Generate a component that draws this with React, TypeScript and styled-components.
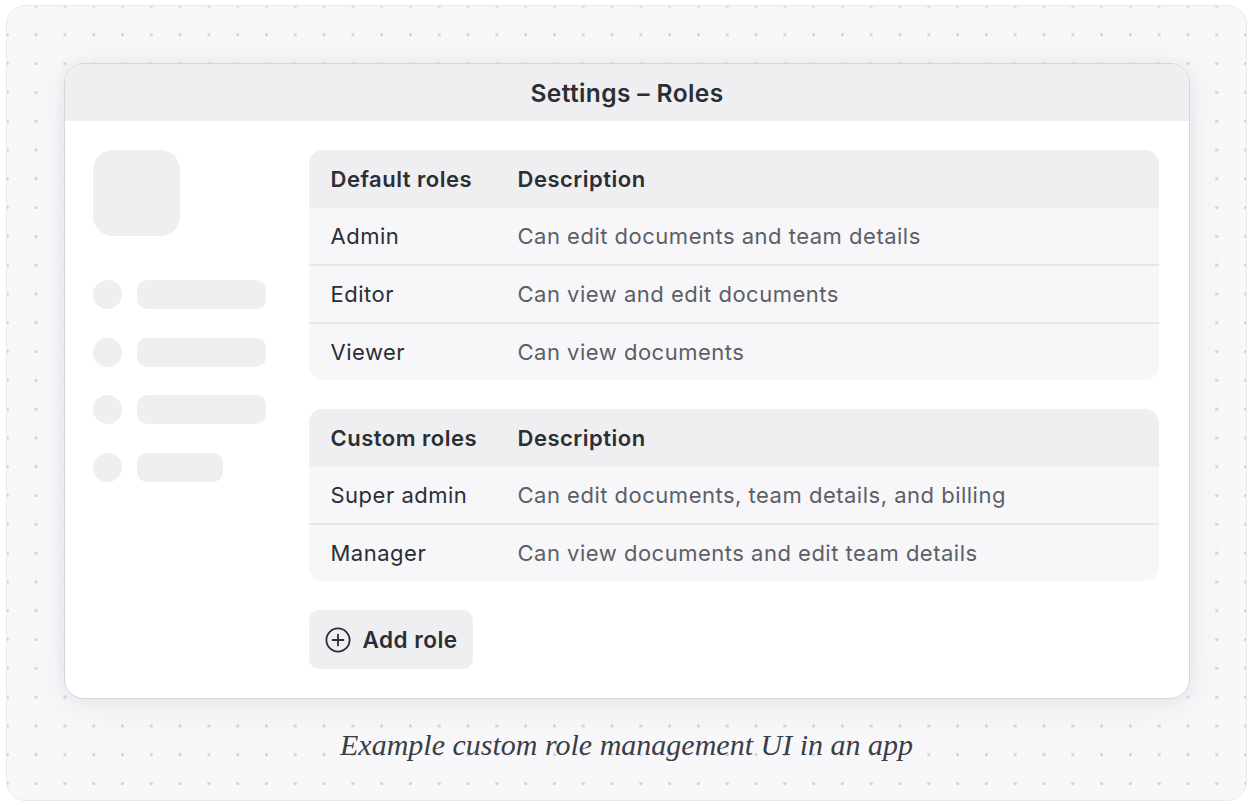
import React from 'react';
import styled, { createGlobalStyle } from 'styled-components';

const GlobalStyle = createGlobalStyle`
  html, body {
    margin: 0;
    padding: 0;
    background: #ffffff;
  }
  body {
    font-family: Inter, 'Noto Sans', sans-serif;
    color: #2a2e35;
  }
`;

type Role = { name: string; description: string };

const defaultRoles: Role[] = [
  { name: 'Admin', description: 'Can edit documents and team details' },
  { name: 'Editor', description: 'Can view and edit documents' },
  { name: 'Viewer', description: 'Can view documents' },
];

const customRoles: Role[] = [
  { name: 'Super admin', description: 'Can edit documents, team details, and billing' },
  { name: 'Manager', description: 'Can view documents and edit team details' },
];

const skeletonBars = [129, 129, 129, 86];

const PlusCircleIcon = () => (
  <svg width='26' height='26' viewBox='0 0 26 26' fill='none'>
    <circle cx='13' cy='13' r='11.6' stroke='#2a2e35' strokeWidth='1.8' />
    <path d='M13 7.6v10.8M7.6 13h10.8' stroke='#2a2e35' strokeWidth='1.8' strokeLinecap='round' />
  </svg>
);

const RolesTable = ({ title, roles }: { title: string; roles: Role[] }) => (
  <Table>
    <HeadRow>
      <HeadCell>{title}</HeadCell>
      <HeadCell>Description</HeadCell>
    </HeadRow>
    {roles.map((role) => (
      <BodyRow key={role.name}>
        <NameCell>{role.name}</NameCell>
        <DescriptionCell>{role.description}</DescriptionCell>
      </BodyRow>
    ))}
  </Table>
);

const App = () => {
  return (
    <>
      <GlobalStyle />
      <Frame>
        <Window>
          <WindowHeader>Settings – Roles</WindowHeader>
          <WindowBody>
            <Sidebar>
              <AvatarSkeleton />
              <SkeletonList>
                {skeletonBars.map((width, i) => (
                  <SkeletonRow key={i}>
                    <SkeletonDot />
                    <SkeletonBar $width={width} />
                  </SkeletonRow>
                ))}
              </SkeletonList>
            </Sidebar>
            <Content>
              <RolesTable title='Default roles' roles={defaultRoles} />
              <RolesTable title='Custom roles' roles={customRoles} />
              <AddRoleButton type='button'>
                <PlusCircleIcon />
                Add role
              </AddRoleButton>
            </Content>
          </WindowBody>
        </Window>
        <Caption>Example custom role management UI in an app</Caption>
      </Frame>
    </>
  );
};

export default App;

const Frame = styled.div`
  box-sizing: border-box;
  width: 1241px;
  height: 796px;
  margin: 5px 0 0 6px;
  padding: 57px 0 0 57px;

  border: 1px solid #e9e9ec;
  border-radius: 20px;

  background-color: #f8f8fa;
  background-image: radial-gradient(circle, #d3d3d8 1.3px, transparent 1.8px);
  background-size: 28.8px 28.8px;
  background-position: -14.1px -14.4px;
`;

const Window = styled.div`
  box-sizing: border-box;
  width: 1126px;
  height: 636px;

  display: flex;
  flex-direction: column;

  overflow: hidden;
  background: #ffffff;
  border: 1.5px solid #d6d6db;
  border-radius: 20px;
  box-shadow: 0 6px 36px rgba(30, 30, 40, 0.07), 0 0 0 6px rgba(240, 240, 243, 0.35);
`;

const WindowHeader = styled.div`
  flex: 0 0 57px;

  display: flex;
  align-items: center;
  justify-content: center;

  background: #efeff1;

  font-weight: 600;
  font-size: 24.5px;
  letter-spacing: 0.4px;
  color: #2a2e35;
`;

const WindowBody = styled.div`
  display: grid;
  grid-template-columns: 173px 850px;
  column-gap: 43px;

  padding: 29px 0 0 27.5px;
`;

const Sidebar = styled.div`
  display: flex;
  flex-direction: column;
`;

const AvatarSkeleton = styled.div`
  width: 87px;
  height: 86px;

  border-radius: 20px;
  background: #efeff1;
`;

const SkeletonList = styled.div`
  display: flex;
  flex-direction: column;
  gap: 28.6px;

  margin-top: 44px;
`;

const SkeletonRow = styled.div`
  display: flex;
  align-items: center;
  gap: 15px;
`;

const SkeletonDot = styled.div`
  width: 29px;
  height: 29px;

  border-radius: 50%;
  background: #efeff1;
`;

const SkeletonBar = styled.div<{ $width: number }>`
  width: ${({ $width }) => $width}px;
  height: 29px;

  border-radius: 10px;
  background: #efeff1;
`;

const Content = styled.div`
  display: flex;
  flex-direction: column;
  align-items: flex-start;
  gap: 29px;
`;

const Table = styled.div`
  width: 100%;

  overflow: hidden;
  border-radius: 14px;
  background: #f7f7f9;
`;

const HeadRow = styled.div`
  display: grid;
  grid-template-columns: 187px 1fr;
  align-items: center;

  height: 58px;
  padding-left: 22px;

  background: #efeff1;
`;

const BodyRow = styled(HeadRow)`
  height: 56px;
  background: #f7f7f9;

  & + & {
    border-top: 2px solid #e6e6e9;
    height: 58px;
    box-sizing: border-box;
  }
`;

const HeadCell = styled.div`
  font-weight: 600;
  font-size: 22px;
  letter-spacing: 0.5px;
  color: #2a2e35;
`;

const NameCell = styled.div`
  font-weight: 400;
  font-size: 22px;
  letter-spacing: 0.5px;
  color: #2a2e35;
`;

const DescriptionCell = styled.div`
  font-weight: 400;
  font-size: 22px;
  letter-spacing: 0.5px;
  color: #5b5f67;
`;

const AddRoleButton = styled.button`
  display: flex;
  align-items: center;
  gap: 12px;

  height: 59px;
  padding: 0 15px 0 16px;

  border: none;
  border-radius: 10px;
  background: #efeff1;

  font-family: Inter, 'Noto Sans', sans-serif;
  font-weight: 600;
  font-size: 22.5px;
  letter-spacing: 0.5px;
  color: #2a2e35;
  cursor: pointer;
`;

const Caption = styled.p`
  margin: 29px 0 0 -57px;

  text-align: center;
  font-family: 'Liberation Serif', 'DejaVu Serif', serif;
  font-style: italic;
  font-size: 30px;
  color: #3a3e46;
`;
